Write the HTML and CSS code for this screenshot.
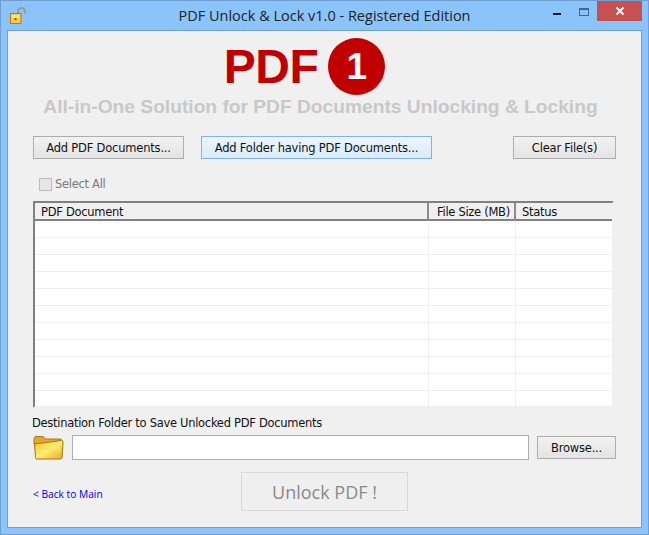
FILE: index.html
```html
<!DOCTYPE html>
<html lang="en">
<head>
    <meta charset="UTF-8">
    <title>PDF Unlock &amp; Lock v1.0 - Registered Edition</title>
    <link rel="stylesheet" href="styles.css">
</head>
<body>
  <div class="window">
    <header class="titlebar">
      <div class="title-icon">
        <svg width="18" height="18" viewBox="0 0 18 18">
          <path d="M8 6.500V4.500a3.500 3.500 0 0 1 7 0V6.500" fill="none" stroke="#9a9a9a" stroke-width="2"/>
          <rect x="0.500" y="6.500" width="10.500" height="10" fill="#f3cc4a" stroke="#b47c12"/>
          <rect x="2" y="8" width="7.500" height="3" fill="#fbe68a"/>
          <rect x="4.500" y="11" width="2" height="2" fill="#8a5c08"/>
        </svg>
      </div>
      <div class="title-text">PDF Unlock &amp; Lock v1.0 - Registered Edition</div>
      <div class="controls">
        <span class="ctl-min"></span>
        <span class="ctl-max"></span>
        <span class="ctl-close">
          <svg width="10" height="10" viewBox="0 0 10 10"><path d="M1.500 1.500l7 7M8.500 1.500l-7 7" stroke="#fff" stroke-width="2"/></svg>
        </span>
      </div>
    </header>

    <main class="client">
      <section class="brand">
        <div class="logo">
          <span class="logo-pdf">PDF</span>
          <span class="logo-badge">1</span>
        </div>
        <div class="tagline">All-in-One Solution for PDF Documents Unlocking &amp; Locking</div>
      </section>

      <div class="actions">
        <button class="btn btn-add">Add PDF Documents...</button>
        <button class="btn btn-folder">Add Folder having PDF Documents...</button>
        <button class="btn btn-clear">Clear File(s)</button>
      </div>

      <label class="select-all"><span class="check"></span>Select All</label>

      <div class="file-list">
        <div class="list-head">
          <div class="col-name">PDF Document</div>
          <div class="col-size">File Size (MB)</div>
          <div class="col-status">Status</div>
        </div>
        <div class="list-row"><div></div><div></div><div></div></div>
        <div class="list-row"><div></div><div></div><div></div></div>
        <div class="list-row"><div></div><div></div><div></div></div>
        <div class="list-row"><div></div><div></div><div></div></div>
        <div class="list-row"><div></div><div></div><div></div></div>
        <div class="list-row"><div></div><div></div><div></div></div>
        <div class="list-row"><div></div><div></div><div></div></div>
        <div class="list-row"><div></div><div></div><div></div></div>
        <div class="list-row"><div></div><div></div><div></div></div>
        <div class="list-row"><div></div><div></div><div></div></div>
        <div class="list-row"><div></div><div></div><div></div></div>
      </div>

      <div class="dest-label">Destination Folder to Save Unlocked PDF Documents</div>
      <div class="dest-row">
        <svg class="folder" width="31" height="26" viewBox="0 0 31 26">
          <defs>
            <linearGradient id="folderFront" x1="0" y1="0" x2="1" y2="1">
              <stop offset="0" stop-color="#f5c02e"/>
              <stop offset="0.5" stop-color="#ffec70"/>
              <stop offset="1" stop-color="#e9aa20"/>
            </linearGradient>
          </defs>
          <path d="M1 4.500Q1 1.500 3 1.500H10L12.500 4H27Q29 4 29 6V9H1Z" fill="#e0a92e" stroke="#a9781a"/>
          <path d="M1.500 9L28.500 5.500Q30.500 5.500 30 8L29 22.500Q29 24 27 24H4Q2.500 24 2.500 22.500Z" fill="url(#folderFront)" stroke="#a8760f"/>
        </svg>
        <div class="dest-input"></div>
        <button class="btn btn-browse">Browse...</button>
      </div>

      <div class="bottom">
        <a class="back-link" href="#">&lt; Back to Main</a>
        <button class="btn-unlock">Unlock PDF !</button>
      </div>
    </main>
  </div>
</body>
</html>
```

FILE: styles.css
```css
:root {
  --clr-frame: #8ac4fb;
  --clr-edge: #6e9fd0;
  --clr-client: #f0f0f0;
  --clr-line: #efefef;
  --ui-font: 'DejaVu Sans', sans-serif;
}
* { margin: 0; padding: 0; box-sizing: border-box; }
html, body { width: 649px; height: 535px; overflow: hidden; }
body { font-family: var(--ui-font); font-size: 11.500px; letter-spacing: -0.290px; color: #111; }
.window {
  width: 649px;
  height: 535px;
  background: var(--clr-frame);
  border: 1px solid var(--clr-edge);
  display: flex;
  flex-direction: column;
}
/* Title bar */
.titlebar {
  height: 29px;
  display: grid;
  grid-template-columns: 1fr auto 1fr;
}
.title-icon { padding: 6px 0 0 9px; }
.title-text {
  font-family: 'Open Sans', sans-serif;
  font-size: 14.500px;
  letter-spacing: 0;
  line-height: 29px;
  color: #222;
}
.controls {
  display: flex;
  justify-content: flex-end;
  align-items: flex-start;
  padding-right: 6px;
}
.ctl-min {
  width: 8px;
  height: 2px;
  margin: 12px 18px 0 0;
  background: #1c1c1c;
}
.ctl-max {
  width: 10px;
  height: 8px;
  margin: 7px 8px 0 0;
  border: 1px solid #44688c;
  border-top-width: 2px;
}
.ctl-close {
  width: 45px;
  height: 20px;
  background: #c75050;
  display: flex;
  align-items: center;
  justify-content: center;
}
/* Client area */
.client {
  width: 635px;
  height: 498px;
  margin-left: 6px;
  background: var(--clr-client);
  border: 1px solid var(--clr-edge);
  padding: 7px 24px 0 25px;
  display: flex;
  flex-direction: column;
}
.brand {
  display: flex;
  flex-direction: column;
  align-items: center;
}
.logo {
  display: flex;
  align-items: center;
  gap: 10px;
  height: 57px;
  margin-right: 41px;
}
.logo-pdf {
  font-family: 'Liberation Sans', sans-serif;
  font-weight: 700;
  font-size: 48px;
  color: #c00000;
  letter-spacing: -0.500px;
}
.logo-badge {
  width: 57px;
  height: 57px;
  border-radius: 50%;
  background: #c00000;
  color: #fff;
  font-family: 'Liberation Sans', sans-serif;
  font-weight: 700;
  font-size: 37px;
  letter-spacing: 0;
  display: flex;
  align-items: center;
  justify-content: center;
}
.tagline {
  font-family: 'Liberation Sans', sans-serif;
  font-weight: 700;
  font-size: 19.200px;
  letter-spacing: 0;
  line-height: 23px;
  margin-right: 9px;
  color: #c8c8c8;
  white-space: nowrap;
}
/* Buttons */
.btn {
  height: 23px;
  font-family: var(--ui-font);
  font-size: 11.500px;
  letter-spacing: -0.200px;
  color: #111;
  background: linear-gradient(#f2f2f2, #e3e3e3);
  border: 1px solid #adadad;
}
.actions {
  display: flex;
  margin-top: 18px;
}
.btn-add { width: 151px; margin-right: 17px; }
.btn-folder {
  width: 231px;
  margin-right: 81px;
  background: linear-gradient(#ebf5fe, #d9ecfc);
  border-color: #7eb4ea;
}
.btn-clear { width: 103px; }
.select-all {
  display: flex;
  align-items: center;
  height: 14px;
  margin: 18px 0 10px 6px;
  color: #7a7a7a;
}
.check {
  width: 13px;
  height: 13px;
  margin-right: 3px;
  background: #e6e6e6;
  border: 1px solid #bcbcbc;
}
/* File list */
.file-list {
  width: 581px;
  height: 207px;
  background: #fff;
  border: 2px solid var(--clr-line);
  border-top-color: #808080;
  border-left-color: #808080;
}
.list-head, .list-row {
  display: grid;
  grid-template-columns: 394px 87px 1fr;
}
.list-head {
  height: 18px;
  line-height: 18px;
  background: #f0f0f0;
  border-bottom: 2px solid #808080;
}
.list-head > div { padding-left: 6px; border-right: 2px solid #8c8c8c; white-space: nowrap; }
.list-head > div:last-child { border-right: none; }
.list-head .col-size { padding-left: 8px; }
.list-row { height: 17px; border-bottom: 1px solid var(--clr-line); }
.list-row > div { border-right: 1px solid var(--clr-line); }
.list-row > div:last-child { border-right: none; }
/* Destination */
.dest-label { margin: 8px 0 0 -1px; height: 19px; line-height: 14px; }
.dest-row { display: flex; align-items: center; height: 25px; }
.folder { flex: none; }
.dest-input {
  width: 457px;
  height: 25px;
  margin: 0 8px;
  background: #fff;
  border: 1px solid #adadad;
}
.btn-browse { width: 79px; }
/* Bottom row */
.bottom {
  display: flex;
  align-items: center;
  margin-top: 12px;
}
.back-link {
  width: 208px;
  font-family: 'Open Sans', sans-serif;
  font-size: 10.200px;
  letter-spacing: 0;
  color: #0000ee;
  text-decoration: none;
  padding-top: 4px;
}
.btn-unlock {
  width: 167px;
  height: 39px;
  background: #efefef;
  border: 1px solid #d9d9d9;
  font-family: 'Open Sans', sans-serif;
  font-size: 18px;
  color: #8a8a8a;
}
```
